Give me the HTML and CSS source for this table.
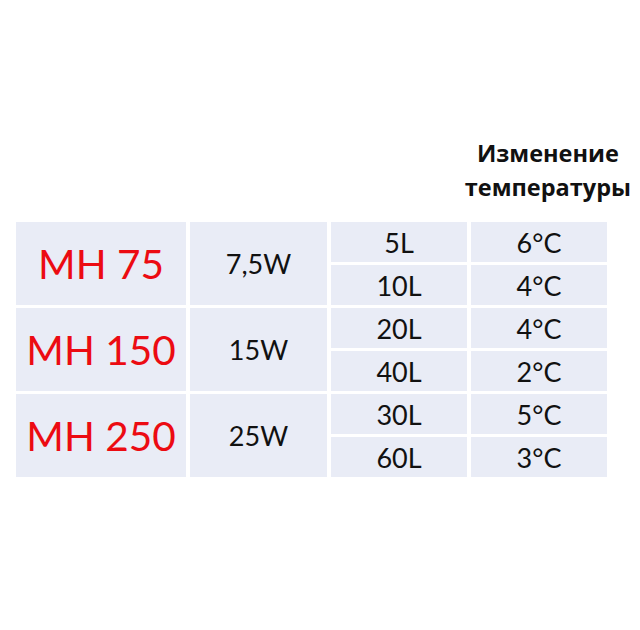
FILE: index.html
```html
<!DOCTYPE html>
<html lang="ru">
<head>
<meta charset="utf-8">
<link rel="stylesheet" href="styles.css">
</head>
<body>
<div class="page">
  <div class="header-row">
    <div class="header">Изменение<br>температуры</div>
  </div>
  <div class="table">
    <div class="cell model span2">MH 75</div>
    <div class="cell power span2">7,5W</div>
    <div class="cell vol">5L</div>
    <div class="cell temp">6°C</div>
    <div class="cell vol">10L</div>
    <div class="cell temp">4°C</div>

    <div class="cell model span2">MH 150</div>
    <div class="cell power span2">15W</div>
    <div class="cell vol">20L</div>
    <div class="cell temp">4°C</div>
    <div class="cell vol">40L</div>
    <div class="cell temp">2°C</div>

    <div class="cell model span2">MH 250</div>
    <div class="cell power span2">25W</div>
    <div class="cell vol">30L</div>
    <div class="cell temp">5°C</div>
    <div class="cell vol">60L</div>
    <div class="cell temp">3°C</div>
  </div>
</div>
</body>
</html>
```
FILE: styles.css
```css
html, body {
  margin: 0;
  padding: 0;
  background: #ffffff;
}
.page {
  width: 640px;
  height: 630px;
  padding-top: 136px;
  box-sizing: border-box;
  font-family: "Lato", "Open Sans", sans-serif;
  color: #111111;
}
.header-row {
  display: flex;
  justify-content: flex-end;
  padding-right: 9px;
}
.header {
  text-align: center;
  font-family: "Open Sans", sans-serif;
  font-weight: 700;
  font-size: 23.5px;
  line-height: 34px;
  color: #111;
}
.table {
  margin-top: 18px;
  margin-left: 16px;
  display: grid;
  grid-template-columns: 170px 137px 136px 136px;
  grid-auto-rows: 40px;
  column-gap: 4px;
  row-gap: 3px;
}
.cell {
  background: #e9ecf6;
  display: flex;
  align-items: center;
  justify-content: center;
  font-size: 27px;
}
.span2 {
  grid-row: span 2;
}
.model {
  color: #ec0b12;
  font-size: 40.5px;
}
.power {
  font-size: 27px;
}
```
